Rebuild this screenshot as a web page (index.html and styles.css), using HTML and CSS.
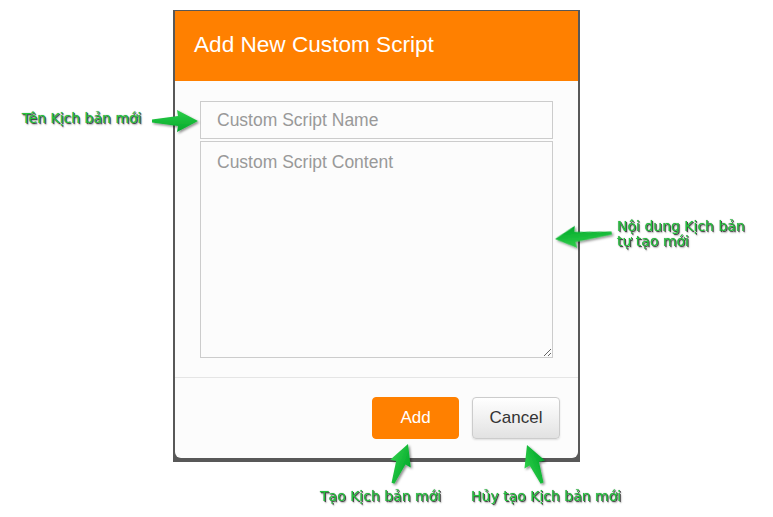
FILE: index.html
```html
<!DOCTYPE html>
<html lang="vi">
<head>
<meta charset="utf-8">
<title>Add New Custom Script</title>
<link rel="stylesheet" href="styles.css">
</head>
<body>
<div class="stage">
  <div class="frame">
    <div class="dialog">
      <div class="header"><h1 class="title">Add New Custom Script</h1></div>
      <div class="body">
        <input class="field name" type="text" placeholder="Custom Script Name">
        <textarea class="field content" placeholder="Custom Script Content"></textarea>
      </div>
      <div class="footer">
        <button class="btn add">Add</button>
        <button class="btn cancel">Cancel</button>
      </div>
    </div>
  </div>
</div>

<svg class="arrows" width="773" height="517" viewBox="0 0 773 517">
  <defs>
    <linearGradient id="g" x1="0" y1="0" x2="0" y2="1">
      <stop offset="0" stop-color="#2fcf4a"/>
      <stop offset="1" stop-color="#00a82a"/>
    </linearGradient>
    <filter id="sh" x="-30%" y="-30%" width="160%" height="160%">
      <feDropShadow dx="1.5" dy="1.5" stdDeviation="1.2" flood-color="#000" flood-opacity="0.45"/>
    </filter>
  </defs>
  <g fill="url(#g)" filter="url(#sh)">
    <polygon transform="translate(198 121)" points="-46,-1.5 -20,-5 -21,-11 0,0 -21,11 -20,5 -46,1.5"/>
    <polygon transform="translate(555 239) rotate(174)" points="-57,-1.5 -20,-5 -21,-11 0,0 -21,11 -20,5 -57,1.5"/>
    <polygon transform="translate(408 444) rotate(-69)" points="-42,-1.5 -20,-5 -21,-11 0,0 -21,11 -20,5 -42,1.5"/>
    <polygon transform="translate(527 445) rotate(-111.5)" points="-41,-1.5 -20,-5 -21,-11 0,0 -21,11 -20,5 -41,1.5"/>
  </g>
</svg>

<div class="note n1">Tên Kịch bản mới</div>
<div class="note n2">Nội dung Kịch bản<br>tự tạo mới</div>
<div class="note n3">Tạo Kịch bản mới</div>
<div class="note n4">Hủy tạo Kịch bản mới</div>
</body>
</html>
```

FILE: styles.css
```css
* { box-sizing: border-box; }

html, body {
  margin: 0;
  padding: 0;
}

body {
  position: relative;
  width: 773px;
  height: 517px;
  overflow: hidden;
  background: #ffffff;
  font-family: "Liberation Sans", Arial, sans-serif;
}

.stage {
  padding: 10px 0 0 173px;
}

.frame {
  width: 407px;
  background: #585858;
  padding: 1px 2px 4px 2px;
}

.dialog {
  width: 403px;
  background: #fcfcfc;
  border-radius: 0 0 6px 6px;
  overflow: hidden;
}

.header {
  height: 70px;
  background: #ff8000;
  display: flex;
  align-items: center;
  padding: 0 0 3px 19px;
}

.title {
  margin: 0;
  font-size: 22.6px;
  font-weight: normal;
  color: #ffffff;
}

.body {
  display: flex;
  flex-direction: column;
  gap: 2px;
  padding: 20px 25px 19px 25px;
}

.field {
  display: block;
  width: 353px;
  margin: 0;
  border: 1px solid #cccccc;
  border-radius: 0;
  background: #fcfcfc;
  font-family: "Liberation Sans", Arial, sans-serif;
  font-size: 17.5px;
  color: #333333;
  outline: none;
}

.field::placeholder {
  color: #999999;
  opacity: 1;
}

.name {
  height: 38px;
  padding: 0 16px;
}

.content {
  height: 217px;
  padding: 10px 16px;
  resize: vertical;
  line-height: 20px;
}

.footer {
  border-top: 1px solid #e5e5e5;
  padding: 19px 18px 19px 0;
  display: flex;
  justify-content: flex-end;
  gap: 13px;
}

.btn {
  height: 42px;
  margin: 0;
  border-radius: 4px;
  font-family: "Liberation Sans", Arial, sans-serif;
  font-size: 17px;
  padding: 0;
  cursor: pointer;
}

.add {
  width: 87px;
  background: #ff8000;
  border: 1px solid #ff8000;
  color: #ffffff;
}

.cancel {
  width: 88px;
  background: linear-gradient(#ffffff, #e2e2e2);
  border: 1px solid #cccccc;
  color: #333333;
  box-shadow: 0 1px 2px rgba(0, 0, 0, 0.12);
}

.arrows {
  position: absolute;
  left: 0;
  top: 0;
  pointer-events: none;
}

.note {
  position: absolute;
  font-family: "DejaVu Sans", Verdana, sans-serif;
  font-size: 14px;
  line-height: 15px;
  color: #22c43c;
  white-space: nowrap;
  text-shadow:
    1px 1px 0 #4a4a4a,
    0 0 1px #777777,
    1.5px 1.5px 1.5px rgba(0, 0, 0, 0.35);
}

.n1 { left: 22px; top: 111px; }
.n2 { left: 617px; top: 219px; }
.n3 { left: 320px; top: 489px; }
.n4 { left: 471px; top: 489px; }
```
